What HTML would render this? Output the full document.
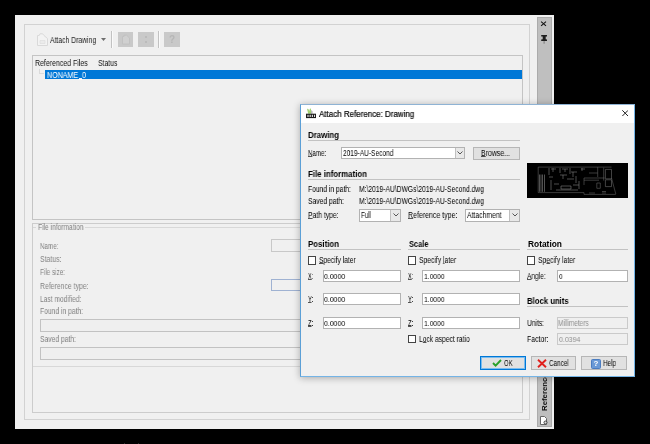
<!DOCTYPE html>
<html>
<head>
<meta charset="utf-8">
<title>Attach Reference: Drawing</title>
<style>
html,body{margin:0;padding:0;background:#000;}
body{width:650px;height:444px;position:relative;overflow:hidden;font-family:"Liberation Sans",sans-serif;font-size:8px;color:#000;}
.a{position:absolute;box-sizing:border-box;white-space:nowrap;}
.t{position:absolute;white-space:nowrap;line-height:12px;height:12px;transform-origin:0 50%;will-change:transform;}
.inp{position:absolute;box-sizing:border-box;background:#fff;border:1px solid #b2b2b2;}
.dis{background:#efefef;border-color:#cacaca;}
.hl{position:absolute;height:1px;background:#c2c2c2;}
.cb{position:absolute;box-sizing:border-box;width:8.2px;height:8.2px;border:1px solid #444;background:#fff;}
.btn{position:absolute;box-sizing:border-box;background:#e1e1e1;border:1px solid #b6b6b6;}
.dd{position:absolute;box-sizing:border-box;background:#e8e8e8;border-left:1px solid #c0c0c0;}
u{text-decoration:underline;text-decoration-thickness:0.6px;text-underline-offset:0.4px;text-decoration-color:rgba(0,0,0,0.65);}
</style>
</head>
<body>

<!-- ===== Palette ===== -->
<div class="a" style="left:15px;top:15px;width:539px;height:414px;background:#f0f0f0;"></div>
<!-- title strip -->
<div class="a" style="left:537px;top:17px;width:15px;height:410px;background:#bfbfbf;border:1px solid #ababab;"></div>
<svg class="a" style="left:540px;top:20px;" width="8" height="8" viewBox="0 0 8 8"><path d="M1.1 1.6 L6 5.9 M6 1.6 L1.1 5.9" stroke="#111" stroke-width="1.05" fill="none"/></svg>
<svg class="a" style="left:540px;top:34px;" width="8" height="11" viewBox="0 0 8 11"><path d="M1.2 1 H7 V2.4 H5.7 V5.2 L7 5.6 V7.1 H1.2 V5.6 L2.7 5.2 V2.4 H1.2 Z" fill="#1e1e1e"/><rect x="3.6" y="7.1" width="1" height="2.6" fill="#777"/></svg>
<div class="a" style="left:538px;top:300px;width:13px;height:111px;overflow:visible;">
  <div style="position:absolute;left:0;top:111px;transform-origin:0 0;transform:rotate(-90deg);will-change:transform;font-weight:bold;font-size:7.8px;line-height:13px;height:13px;white-space:nowrap;color:#111;">Reference Manager</div>
</div>
<svg class="a" style="left:540px;top:416px;" width="8" height="9" viewBox="0 0 8 9"><path d="M0.5 0.5 H4.5 L6.5 2.5 V8.5 H0.5 Z" fill="#fff" stroke="#666" stroke-width="1"/><circle cx="5.5" cy="6.5" r="1.5" fill="#ddd" stroke="#333" stroke-width="0.9"/></svg>

<!-- outer group -->
<div class="a" style="left:24px;top:24px;width:506px;height:396px;border:1px solid #d2d2d2;"></div>

<!-- toolbar -->
<svg class="a" style="left:35.5px;top:32px;" width="13" height="15" viewBox="0 0 13 15"><path d="M1.5 3.5 H3.2 L4 1.8 H6.6 L8 3.5 L11.5 6.5 V13.5 H1.5 Z" fill="#f3f3f3" stroke="#d9d9d9" stroke-width="1"/><path d="M4 8.5 h5 v3 h-5 z M4 10 h5" fill="none" stroke="#dedede" stroke-width="0.8"/></svg>
<svg class="a" style="left:101px;top:38px;" width="5" height="3" viewBox="0 0 5 3"><path d="M0 0 H5 L2.5 3 Z" fill="#6e6e6e"/></svg>
<div class="a" style="left:111px;top:31px;width:2px;height:17px;background:#fafafa;border-left:1px solid #c2c2c2;"></div>
<div class="a" style="left:118px;top:32px;width:15px;height:15px;background:#c9c9c9;"></div>
<svg class="a" style="left:121px;top:34px;" width="10" height="11" viewBox="0 0 10 11"><path d="M1.5 2.5 H3 V1.2 H5.6 L8.5 4 V10 H1.5 Z" fill="#d0d0d0" stroke="#c0c0c0" stroke-width="0.9"/></svg>
<div class="a" style="left:138px;top:32px;width:16px;height:15px;background:#c9c9c9;"></div>
<div class="a" style="left:145px;top:36px;width:2px;height:2px;background:#bbb;"></div>
<div class="a" style="left:145px;top:41px;width:2px;height:2px;background:#bbb;"></div>
<div class="a" style="left:158px;top:31px;width:2px;height:17px;background:#fafafa;border-left:1px solid #c2c2c2;"></div>
<div class="a" style="left:164px;top:32px;width:16px;height:15px;background:#c9c9c9;"></div>
<div class="a" style="left:164px;top:33px;width:16px;height:13px;line-height:13px;text-align:center;font-size:10px;color:#b6b6b6;font-weight:bold;will-change:transform;">?</div>

<!-- list box -->
<div class="a" style="left:32px;top:55px;width:491px;height:165px;border:1px solid #c4c4c4;"></div>
<div class="a" style="left:39px;top:69px;width:1px;height:5px;background:#dadada;"></div>
<div class="a" style="left:39px;top:73px;width:5px;height:1px;background:#dadada;"></div>
<div class="a" style="left:45px;top:70px;width:477px;height:9px;background:#0078d7;"></div>

<div class="a" style="left:78.6px;top:77.6px;width:3.8px;height:0.9px;background:rgba(255,255,255,0.9);"></div>
<!-- lower box + file info group (palette) -->
<div class="a" style="left:32px;top:223px;width:491px;height:190px;border:1px solid #cccccc;"></div>
<div class="a" style="left:33px;top:227px;width:489px;height:140px;border:1px solid #d8d8d8;border-left:none;border-right:none;"></div>
<div class="a" style="left:36px;top:225px;width:49px;height:6px;background:#f0f0f0;"></div>

<div class="a" style="left:271px;top:239px;width:100px;height:13px;border:1px solid #c8c8c8;background:#f0f0f0;"></div>
<div class="a" style="left:271px;top:279px;width:100px;height:12px;border:1px solid #9fb2d2;background:#f0f0f0;"></div>
<div class="a" style="left:40px;top:319px;width:470px;height:13px;border:1px solid #c2c2c2;background:#efefef;"></div>
<div class="a" style="left:40px;top:347px;width:470px;height:13px;border:1px solid #c2c2c2;background:#efefef;"></div>

<!-- bottom dots -->
<div class="a" style="left:124px;top:443px;width:1px;height:1px;background:#2e2e2e;"></div>
<div class="a" style="left:138px;top:443px;width:1px;height:1px;background:#2e2e2e;"></div>

<!-- ===== Dialog ===== -->
<div class="a" style="left:300px;top:104px;width:335px;height:273px;background:#f0f0f0;border:1px solid #5b9fd6;border-top-color:#8fb3d4;border-right-color:#74b4e6;border-bottom-color:#74b4e6;box-shadow:0 1px 7px rgba(0,0,0,0.30);"></div>
<div class="a" style="left:301px;top:105px;width:333px;height:18px;background:#fff;"></div>
<svg class="a" style="left:305px;top:108px;" width="12" height="11" viewBox="0 0 12 11"><path d="M2 0.8 L3.4 1 L4.2 3 L5 0.6 L6 0.8 L6 5.7 H3.2 Z" fill="#a4d273"/><path d="M6 2 L7.6 3.2 V5.7 H6 Z" fill="#b9b9b9"/><rect x="1" y="5.7" width="10" height="4.4" fill="#1c1c1c"/><rect x="2.4" y="6.8" width="1.2" height="2.2" fill="#ddd"/><rect x="4.6" y="6.8" width="1.2" height="2.2" fill="#ddd"/><rect x="6.8" y="6.8" width="1.2" height="2.2" fill="#ddd"/><rect x="9" y="6.8" width="1" height="2.2" fill="#ddd"/></svg>
<svg class="a" style="left:621.8px;top:110px;" width="6.4" height="6.4" viewBox="0 0 6.4 6.4"><path d="M0.3 0.3 L6.1 6.1 M6.1 0.3 L0.3 6.1" stroke="#222" stroke-width="1" fill="none"/></svg>

<!-- Drawing -->
<div class="hl" style="left:308px;top:140px;width:212px;"></div>
<div class="inp" style="left:341px;top:146.5px;width:124px;height:12.5px;"></div>
<div class="dd" style="left:455px;top:147.5px;width:9px;height:10.5px;"></div>
<svg class="a" style="left:457px;top:151px;" width="6" height="4" viewBox="0 0 6 4"><path d="M0.5 0.5 L3 3 L5.5 0.5" stroke="#444" stroke-width="0.9" fill="none"/></svg>
<div class="btn" style="left:473px;top:146.5px;width:47px;height:13px;"></div>

<!-- preview -->
<div class="a" style="left:527px;top:163px;width:101px;height:35px;background:#000;"></div>
<svg class="a" style="left:527px;top:163px;" width="101" height="35" viewBox="0 0 101 35">
<g fill="none" stroke="#6a6a6a" stroke-width="0.55">
<path d="M11.2 4.1 H84.5 M11.2 4.1 V29.6 M11.2 29.6 H57 M57 31.4 H88.8 M57 29.6 V31.4"/>
<path d="M12.5 11.5 V28.8 M14 11.5 V28.8 M15.5 11.5 V28.8 M17.5 11.5 V28.8" stroke="#959595"/>
<path d="M22 5 V12 M24 6 H29 M26 5 V9 M33 5 V10 M35 6 H41 M38 6 V9 M43 5 V11 M22 14 H26 M24 17 V27 M27 21 H32 M33 12 H40 M36 12 V16 M44 9 H50 M46 9 V14 M40 16 H47 M49 13 V20 M34 23 H44 V26 H34 Z M46 22 H52 M52 18 V26 M29 27 H51 M54 6 H58 M55 5 V8" stroke="#8c8c8c"/>
<path d="M57 15 H77.6 M57 17.2 H72 M57 15 V22 M70.7 4.1 V14 M76.7 4.6 V17.6 M62 10 H70.7 M69.8 20 H73.3 V25.3 H69.8 Z"/>
<path d="M78.4 6.4 H84.5 V15.8 H78.4 Z M78.4 16.8 H84.5 V23.6 H78.4 Z" stroke="#787878"/>
<path d="M84.5 15 L88.8 31 M75 28.5 H79 M76 28.5 V31 M78 28.5 V31 M62 30 H68" stroke="#666"/>
</g>
</svg>

<!-- File information -->
<div class="hl" style="left:308px;top:179px;width:212px;"></div>
<div class="inp" style="left:359px;top:209px;width:42px;height:12.5px;"></div>
<div class="dd" style="left:390px;top:210px;width:10px;height:10.5px;"></div>
<svg class="a" style="left:392.5px;top:213px;" width="6" height="4" viewBox="0 0 6 4"><path d="M0.5 0.5 L3 3 L5.5 0.5" stroke="#444" stroke-width="0.9" fill="none"/></svg>
<div class="inp" style="left:465px;top:209px;width:55px;height:12.5px;"></div>
<div class="dd" style="left:509px;top:210px;width:10px;height:10.5px;"></div>
<svg class="a" style="left:511.5px;top:213px;" width="6" height="4" viewBox="0 0 6 4"><path d="M0.5 0.5 L3 3 L5.5 0.5" stroke="#444" stroke-width="0.9" fill="none"/></svg>

<!-- Position / Scale / Rotation -->
<div class="hl" style="left:308px;top:249px;width:93px;"></div>
<div class="hl" style="left:408px;top:249px;width:112px;"></div>
<div class="hl" style="left:527px;top:249px;width:101px;"></div>
<div class="cb" style="left:308px;top:256.4px;"></div>
<div class="cb" style="left:408.3px;top:256.4px;"></div>
<div class="cb" style="left:527.3px;top:256.4px;"></div>
<div class="inp" style="left:323px;top:269.5px;width:78px;height:12.5px;"></div>
<div class="inp" style="left:323px;top:292.5px;width:78px;height:12.5px;"></div>
<div class="inp" style="left:323px;top:316.5px;width:78px;height:12.5px;"></div>
<div class="inp" style="left:422px;top:269.5px;width:98px;height:12.5px;"></div>
<div class="inp" style="left:422px;top:292.5px;width:98px;height:12.5px;"></div>
<div class="inp" style="left:422px;top:316.5px;width:98px;height:12.5px;"></div>
<div class="cb" style="left:408.3px;top:334.8px;"></div>
<div class="inp" style="left:556.5px;top:269.5px;width:71.5px;height:12.5px;"></div>

<!-- Block units -->
<div class="hl" style="left:527px;top:306px;width:101px;"></div>
<div class="inp dis" style="left:556.5px;top:316.5px;width:71.5px;height:12.5px;"></div>
<div class="inp dis" style="left:556.5px;top:332.5px;width:71.5px;height:12.5px;"></div>

<!-- buttons -->
<div class="btn" style="left:480px;top:356px;width:46px;height:14px;border-color:#0078d7;box-shadow:inset 0 0 0 1px #7bbcee;"></div>
<svg class="a" style="left:491.5px;top:359px;" width="10" height="8" viewBox="0 0 10 8"><path d="M1 4 L3.6 6.6 L9 1" stroke="#2aa12a" stroke-width="1.9" fill="none"/></svg>
<div class="btn" style="left:530.5px;top:356px;width:45.5px;height:14px;"></div>
<svg class="a" style="left:536.5px;top:358.5px;" width="10" height="9" viewBox="0 0 10 9"><path d="M1 0.8 L9 8.2 M9 0.8 L1 8.2" stroke="#e0201c" stroke-width="1.9" fill="none"/></svg>
<div class="btn" style="left:581px;top:356px;width:46px;height:14px;"></div>
<div class="a" style="left:591px;top:358.5px;width:10px;height:10px;background:#6a99d6;border:1px solid #4b7cc0;border-radius:1.5px;"></div>
<div class="a" style="left:591px;top:358.5px;width:10px;height:10px;line-height:10px;text-align:center;color:#fff;font-weight:bold;font-size:8px;will-change:transform;">?</div>

<div class="t" style="left:50.4px;top:33.8px;font-size:8.6px;color:#1c1c1c;transform:scaleX(0.793);">Attach Drawing</div>
<div class="t" style="left:35.3px;top:57.0px;font-size:9px;color:#111;transform:scaleX(0.774);">Referenced Files</div>
<div class="t" style="left:97.8px;top:57.0px;font-size:9px;color:#111;transform:scaleX(0.760);">Status</div>
<div class="t" style="left:47.0px;top:68.5px;font-size:8.6px;color:#fff;transform:scaleX(0.825);">NONAME_0</div>
<div class="t" style="left:37.8px;top:220.8px;font-size:8.6px;color:#828282;transform:scaleX(0.773);">File information</div>
<div class="t" style="left:40.0px;top:239.9px;font-size:8.6px;color:#828282;transform:scaleX(0.727);">Name:</div>
<div class="t" style="left:40.0px;top:252.9px;font-size:8.6px;color:#828282;transform:scaleX(0.807);">Status:</div>
<div class="t" style="left:40.0px;top:265.5px;font-size:8.6px;color:#828282;transform:scaleX(0.737);">File size:</div>
<div class="t" style="left:40.0px;top:279.9px;font-size:8.6px;color:#828282;transform:scaleX(0.801);">Reference type:</div>
<div class="t" style="left:40.0px;top:293.4px;font-size:8.6px;color:#828282;transform:scaleX(0.774);">Last modified:</div>
<div class="t" style="left:40.0px;top:305.3px;font-size:8.6px;color:#828282;transform:scaleX(0.786);">Found in path:</div>
<div class="t" style="left:40.0px;top:333.3px;font-size:8.6px;color:#828282;transform:scaleX(0.785);">Saved path:</div>
<div class="t" style="left:319.4px;top:108.2px;font-size:8.8px;color:#000;transform:scaleX(0.906);-webkit-text-stroke:0.2px;">Attach Reference: Drawing</div>
<div class="t" style="left:308.0px;top:128.6px;font-size:8.4px;color:#000;transform:scaleX(0.938);font-weight:bold;-webkit-text-stroke:0;">Drawing</div>
<div class="t" style="left:308.0px;top:146.6px;font-size:8.6px;color:#000;transform:scaleX(0.711);"><u>N</u>ame:</div>
<div class="t" style="left:342.6px;top:146.6px;font-size:8.6px;color:#000;transform:scaleX(0.764);">2019-AU-Second</div>
<div class="t" style="left:481.0px;top:146.8px;font-size:8.6px;color:#000;transform:scaleX(0.809);"><u>B</u>rowse...</div>
<div class="t" style="left:308.0px;top:167.6px;font-size:8.4px;color:#000;transform:scaleX(0.939);font-weight:bold;-webkit-text-stroke:0;">File information</div>
<div class="t" style="left:308.0px;top:182.6px;font-size:8.6px;color:#000;transform:scaleX(0.782);">Found in path:</div>
<div class="t" style="left:359.0px;top:182.6px;font-size:8.6px;color:#000;transform:scaleX(0.781);">M:\2019-AU\DWGs\2019-AU-Second.dwg</div>
<div class="t" style="left:308.0px;top:194.6px;font-size:8.6px;color:#000;transform:scaleX(0.785);">Saved path:</div>
<div class="t" style="left:359.0px;top:194.6px;font-size:8.6px;color:#000;transform:scaleX(0.781);">M:\2019-AU\DWGs\2019-AU-Second.dwg</div>
<div class="t" style="left:308.0px;top:209.0px;font-size:8.6px;color:#000;transform:scaleX(0.791);"><u>P</u>ath type:</div>
<div class="t" style="left:361.0px;top:209.0px;font-size:8.6px;color:#000;transform:scaleX(0.722);">Full</div>
<div class="t" style="left:408.0px;top:209.0px;font-size:8.6px;color:#000;transform:scaleX(0.814);"><u>R</u>eference type:</div>
<div class="t" style="left:467.4px;top:209.0px;font-size:8.6px;color:#000;transform:scaleX(0.796);">Attachment</div>
<div class="t" style="left:308.0px;top:238.0px;font-size:8.4px;color:#000;transform:scaleX(0.938);font-weight:bold;-webkit-text-stroke:0;">Position</div>
<div class="t" style="left:408.6px;top:238.0px;font-size:8.4px;color:#000;transform:scaleX(0.886);font-weight:bold;-webkit-text-stroke:0;">Scale</div>
<div class="t" style="left:527.6px;top:238.0px;font-size:8.4px;color:#000;transform:scaleX(0.995);font-weight:bold;-webkit-text-stroke:0;">Rotation</div>
<div class="t" style="left:319.0px;top:254.0px;font-size:8.6px;color:#000;transform:scaleX(0.774);"><u>S</u>pecify later</div>
<div class="t" style="left:419.4px;top:254.0px;font-size:8.6px;color:#000;transform:scaleX(0.786);">Specify <u>l</u>ater</div>
<div class="t" style="left:538.4px;top:254.0px;font-size:8.6px;color:#000;transform:scaleX(0.787);">Sp<u>e</u>cify later</div>
<div class="t" style="left:308.0px;top:270.0px;font-size:8.6px;color:#000;transform:scaleX(0.640);"><u>X</u>:</div>
<div class="t" style="left:324.4px;top:271.0px;font-size:8px;color:#000;transform:scaleX(0.866);">0.0000</div>
<div class="t" style="left:408.4px;top:270.0px;font-size:8.6px;color:#000;transform:scaleX(0.640);"><u>X</u>:</div>
<div class="t" style="left:424.4px;top:271.0px;font-size:8px;color:#000;transform:scaleX(0.842);">1.0000</div>
<div class="t" style="left:308.0px;top:293.0px;font-size:8.6px;color:#000;transform:scaleX(0.679);"><u>Y</u>:</div>
<div class="t" style="left:324.4px;top:294.0px;font-size:8px;color:#000;transform:scaleX(0.866);">0.0000</div>
<div class="t" style="left:408.4px;top:293.0px;font-size:8.6px;color:#000;transform:scaleX(0.679);"><u>Y</u>:</div>
<div class="t" style="left:424.4px;top:294.0px;font-size:8px;color:#000;transform:scaleX(0.842);">1.0000</div>
<div class="t" style="left:308.0px;top:316.6px;font-size:8.6px;color:#000;transform:scaleX(0.681);"><u>Z</u>:</div>
<div class="t" style="left:324.4px;top:317.6px;font-size:8px;color:#000;transform:scaleX(0.866);">0.0000</div>
<div class="t" style="left:408.4px;top:316.6px;font-size:8.6px;color:#000;transform:scaleX(0.681);"><u>Z</u>:</div>
<div class="t" style="left:424.4px;top:317.6px;font-size:8px;color:#000;transform:scaleX(0.842);">1.0000</div>
<div class="t" style="left:527.4px;top:270.0px;font-size:8.6px;color:#000;transform:scaleX(0.763);"><u>A</u>ngle:</div>
<div class="t" style="left:558.6px;top:271.0px;font-size:8px;color:#000;transform:scaleX(0.808);">0</div>
<div class="t" style="left:527.4px;top:294.6px;font-size:8.4px;color:#000;transform:scaleX(0.922);font-weight:bold;-webkit-text-stroke:0;">Block units</div>
<div class="t" style="left:527.0px;top:316.6px;font-size:8.6px;color:#000;transform:scaleX(0.774);">Units:</div>
<div class="t" style="left:558.4px;top:316.6px;font-size:8.6px;color:#8f8f8f;transform:scaleX(0.745);">Millimeters</div>
<div class="t" style="left:527.0px;top:332.6px;font-size:8.6px;color:#000;transform:scaleX(0.807);">Factor:</div>
<div class="t" style="left:558.6px;top:333.6px;font-size:8px;color:#8f8f8f;transform:scaleX(0.875);">0.0394</div>
<div class="t" style="left:419.4px;top:332.6px;font-size:8.6px;color:#000;transform:scaleX(0.779);">L<u>o</u>ck aspect ratio</div>
<div class="t" style="left:504.0px;top:356.6px;font-size:8.6px;color:#000;transform:scaleX(0.692);">OK</div>
<div class="t" style="left:549.0px;top:356.6px;font-size:8.6px;color:#000;transform:scaleX(0.740);">Cancel</div>
<div class="t" style="left:603.4px;top:356.6px;font-size:8.6px;color:#000;transform:scaleX(0.735);">Help</div>

</body>
</html>
